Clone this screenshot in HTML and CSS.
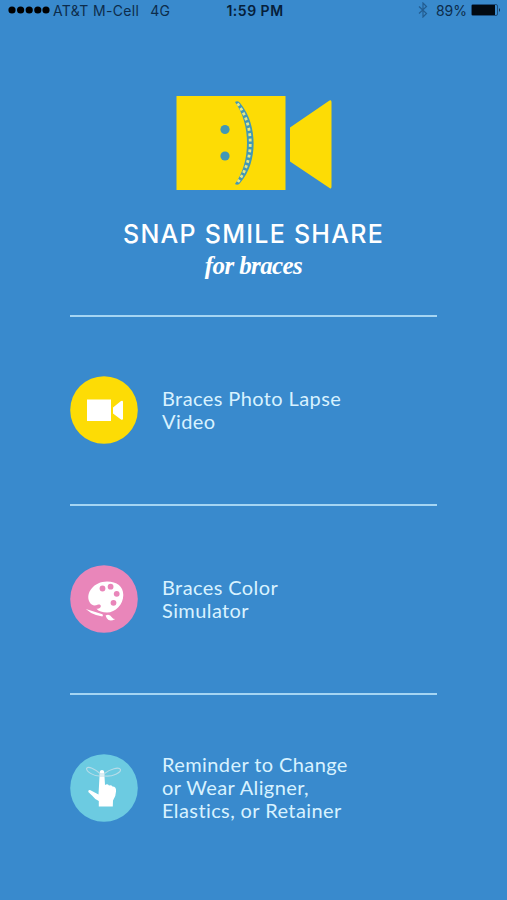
FILE: index.html
```
<!DOCTYPE html>
<html lang="en">
<head>
    <meta charset="UTF-8">
    <meta name="viewport" content="width=device-width, initial-scale=1.0">
    <title>Snap Smile Share</title>
    <link rel="stylesheet" href="styles.css">
</head>
<body>
    <div class="status-bar">
        <div class="status-left">
            <svg class="signal" width="42" height="8" viewBox="0 0 42 8">
                <circle cx="4" cy="4" r="3.6"/>
                <circle cx="12.6" cy="4" r="3.6"/>
                <circle cx="21.2" cy="4" r="3.6"/>
                <circle cx="29.8" cy="4" r="3.6"/>
                <circle cx="38" cy="4" r="3.6"/>
            </svg>
            <span class="carrier">AT&amp;T M-Cell</span>
            <span class="network">4G</span>
        </div>
        <div class="time">1:59 PM</div>
        <div class="status-right">
            <svg class="bluetooth" width="10" height="16" viewBox="0 0 10 16">
                <path d="M1 4.5 L8.5 11.5 L5 15 V1 L8.5 4.5 L1 11.5"/>
            </svg>
            <span class="percent">89%</span>
            <svg class="battery" width="30" height="12" viewBox="0 0 30 12">
                <rect x="0.5" y="0.5" width="26" height="11" rx="1.5" fill="none" stroke="#173f68" stroke-width="0.8"/>
                <rect x="1" y="1" width="23" height="10" fill="#020a12"/>
                <path d="M28 4 Q30 6 28 8 Z" fill="#122c48"/>
            </svg>
        </div>
    </div>

    <header class="header">
        <svg class="logo" width="156" height="96" viewBox="0 0 156 96">
            <path class="yellow" d="M0.500 1 H109.500 V95 H0.500 Z M114 32.500 L153.500 5.500 Q155.500 4.500 155.500 7 V91.500 Q155.500 94.500 153.500 93 L114 66.500 Z"/>
            <circle class="blue" cx="49" cy="34.500" r="4.600"/>
            <circle class="blue" cx="49" cy="61" r="4.600"/>
            <path class="blue" d="M59 7 Q62 5 64.500 8.500 C82 30 82 67 64.500 87.500 Q62 91 59 89 C75 67 75 29 59 7 Z"/>
            <path class="teeth" d="M61.500 8.500 C78.500 31 78.500 65 61.500 87.500"/>
        </svg>
        <h1>SNAP SMILE SHARE</h1>
        <p class="tagline">for braces</p>
    </header>

    <main class="menu">
        <a class="menu-item">
            <svg class="icon" width="68" height="68" viewBox="0 0 68 68">
                <circle cx="34" cy="34" r="33.800" fill="#fddc05"/>
                <path fill="#fff" d="M17 23.500 H41 V45 H17 Z M43 31.500 L51 25 Q53 24 53 26 V42.500 Q53 44.500 51 43.500 L43 37.500 Z"/>
            </svg>
            <span class="label">Braces Photo Lapse<br>Video</span>
        </a>
        <a class="menu-item">
            <svg class="icon" width="68" height="68" viewBox="0 0 68 68">
                <circle cx="34" cy="34" r="33.800" fill="#e986ba"/>
                <path fill="#fff" d="M19.500 37 C15 28 24 16.500 37 16.500 C47 16.500 53.300 21.500 53.300 30 C53.300 39.500 45.500 47.500 37 47.500 C32.500 47.500 28.500 46.500 26.500 43.800 C28.500 43.800 30.500 43 30.800 41.500 C31 39.500 29 39 27 40 C24 41 21 40 19.500 37 Z"/>
                <g fill="#e986ba">
                    <circle cx="32.500" cy="23.500" r="2.900"/>
                    <circle cx="40.600" cy="21.700" r="2.900"/>
                    <circle cx="46.700" cy="28.800" r="2.900"/>
                    <circle cx="43.500" cy="37.800" r="2.900"/>
                </g>
                <path fill="#fff" d="M15.800 44 L32.500 49.200 Q33.500 50.500 32.300 51.500 L26 50 Q20 48 15.800 44 Z M35.600 50.500 Q39.500 48.500 42 52.500 Q43 54 45.200 54 Q39.500 57.500 36.800 53.200 Q36 51.500 35.600 50.500 Z"/>
            </svg>
            <span class="label">Braces Color<br>Simulator</span>
        </a>
        <a class="menu-item">
            <svg class="icon" width="68" height="68" viewBox="0 0 68 68">
                <circle cx="34" cy="34" r="33.800" fill="#6ccbe1"/>
                <path fill="#fff" d="M29.700 19 Q29.700 16 32 16 Q34.300 16 34.300 19 L35 31 Q37.500 29.500 39 31.500 Q41.500 30.800 42.500 32.500 Q46.500 32.500 46 37.500 Q46 42 43 46.500 L42.800 52.500 H28.800 V47 Q25 45.500 22.500 42 L18.300 38 Q18 35.500 20.500 36.300 L28.500 40.500 Z"/>
                <path class="string" d="M29.500 22 C23 22 16.500 17.500 16.500 14.500 C18 11.500 25 15 30 19.500 M34.500 22 C43 23 51 18.500 50.500 15.500 C49 12.500 40 15 34.500 19.500 M29.500 20 H34.800 M29.500 22 H34.800"/>
            </svg>
            <span class="label">Reminder to Change<br>or Wear Aligner,<br>Elastics, or Retainer</span>
        </a>
    </main>
</body>
</html>
```
FILE: styles.css
```
* {
    margin: 0;
    padding: 0;
    box-sizing: border-box;
}

body {
    min-height: 100vh;
    background: #398acd;
    font-family: 'Inter', sans-serif;
    overflow: hidden;
}

.status-bar {
    display: grid;
    grid-template-columns: 1fr auto 1fr;
    align-items: center;
    height: 20px;
    padding: 0 6px 0 8px;
    font-size: 14px;
    color: #0d2c4b;
}

.status-left,
.status-right {
    display: flex;
    align-items: center;
}

.status-right {
    justify-content: flex-end;
}

.carrier {
    margin-left: 3px;
    letter-spacing: 0.35px;
}

.network {
    margin-left: 11px;
}

.time {
    padding-left: 1px;
    font-weight: 600;
    letter-spacing: 0.5px;
    color: #06203a;
}

.bluetooth {
    margin-right: 8px;
    fill: none;
    stroke: #235d91;
    stroke-width: 1.2;
}

.battery {
    margin-left: 4px;
}

.header {
    display: flex;
    flex-direction: column;
    align-items: center;
    height: 295px;
    padding-top: 75px;
    color: #fff;
}

.yellow {
    fill: #fddc05;
}

.blue {
    fill: #4398b5;
}

.teeth {
    fill: none;
    stroke: #e6e887;
    stroke-width: 2.8;
    stroke-dasharray: 2.8 2.6;
}

h1 {
    margin-top: 27px;
    font-size: 25px;
    line-height: 32px;
    font-weight: 500;
    letter-spacing: 1.25px;
    white-space: nowrap;
}

.tagline {
    margin-top: 1px;
    font-family: 'Liberation Serif', serif;
    font-size: 25px;
    line-height: 30px;
    font-style: italic;
    font-weight: bold;
    letter-spacing: -0.6px;
}

.menu {
    width: 367px;
    margin-left: 70px;
}

.menu-item {
    display: flex;
    align-items: center;
    height: 189px;
    padding-bottom: 2px;
    border-top: 2px solid #a5d5f3;
}

.label {
    margin-left: 24px;
    font-family: 'Lato', sans-serif;
    font-size: 20px;
    line-height: 23px;
    letter-spacing: 0.4px;
    color: #d8f2ff;
    white-space: nowrap;
}

.string {
    fill: none;
    stroke: #b7dce8;
    stroke-width: 1.1;
}
```
